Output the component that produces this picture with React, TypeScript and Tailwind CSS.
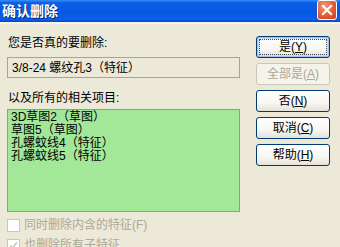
import React from "react";

const font = "font-['Liberation_Sans','Noto_Sans_CJK_SC',sans-serif]";

function XpButton({label, hotkey, disabled = false, isDefault = false}: {
    label: string; hotkey: string; disabled?: boolean; isDefault?: boolean;
}) {
    return (
        <div
            className={
                "h-[22px] w-[74px] rounded-[3px] border flex items-center justify-center text-[12px] leading-none " +
                (disabled
                    ? "border-[#c9c7ba] bg-[#f5f4ea] text-[#aca899]"
                    : "border-[#003c74] bg-[linear-gradient(to_bottom,#ffffff_0%,#f7f6f2_60%,#e3e2da_100%)] text-black") +
                (isDefault ? " shadow-[inset_0_0_0_1px_#a6c2f4,inset_0_0_0_2px_#cfdcf6] outline outline-1 outline-dotted outline-[#444] outline-offset-[-4px]" : "")
            }>
            <span>
                {label}(<span className="underline underline-offset-1">{hotkey}</span>)
            </span>
        </div>
    );
}

function Check({checked = false, label}: { checked?: boolean; label: string }) {
    return (
        <div className="flex items-center gap-[4px] h-[14px]">
            <div className="w-[13px] h-[13px] border border-[#c9c7ba] bg-white flex items-center justify-center">
                {checked && (
                    <svg width="9" height="9" viewBox="0 0 9 9">
                        <path d="M1 4.5 L3.5 7 L8 1.5" stroke="#c9c7ba" strokeWidth="1.6" fill="none"/>
                    </svg>
                )}
            </div>
            <span className="text-[12px] text-[#aca899] leading-[14px]">{label}</span>
        </div>
    );
}

export default function App() {
    return (
        <div className={"w-[340px] h-[247px] overflow-hidden bg-[#ece9d8] " + font}>
            {/* title bar */}
            <div
                className="h-[22px] flex items-center justify-between pl-[2px] pr-[3px] bg-[linear-gradient(to_bottom,#3d8ff9_0%,#0a5fe8_12%,#0558e2_55%,#0a5fea_88%,#0646c4_100%)]">
                <span
                    className="text-white font-bold text-[14px] leading-none [text-shadow:1px_1px_0_#0a1e6e]">确认删除</span>
                <div
                    className="w-[20px] h-[20px] -mt-[2px] rounded-[3px] border border-white bg-[radial-gradient(circle_at_35%_30%,#f39a78_0%,#e35c35_55%,#c8401c_100%)] flex items-center justify-center">
                    <svg width="12" height="12" viewBox="0 0 12 12">
                        <path d="M2 2 L10 10 M10 2 L2 10" stroke="white" strokeWidth="2.2" strokeLinecap="square"/>
                    </svg>
                </div>
            </div>
            <div className="h-[2px] bg-[#f5f3ea]"></div>

            <div className="flex pl-[7px]">
                {/* left column */}
                <div className="w-[233px] flex flex-col">
                    <div className="mt-[12px] text-[12px] leading-[14px] pl-[1px]">您是否真的要删除:</div>
                    <div
                        className="mt-[7px] h-[21px] border border-[#a5a49b] bg-[#ece9d8] flex items-center pl-[4px] text-[12px] leading-none">
                        3/8-24 螺纹孔3（特征）
                    </div>
                    <div className="mt-[13px] text-[12px] leading-[14px] pl-[1px]">以及所有的相关项目:</div>
                    <div
                        className="mt-[4px] h-[103px] border border-[#7f9db9] bg-[#a3e898] pl-[3px] pt-[1px] text-[12px] leading-[13px]">
                        <div>3D草图2（草图）</div>
                        <div>草图5（草图）</div>
                        <div>孔螺蚊线4（特征）</div>
                        <div>孔螺蚊线5（特征）</div>
                    </div>
                    <div className="mt-[6px] flex flex-col gap-[6px]">
                        <Check label="同时删除内含的特征(F)"/>
                        <Check checked label="也删除所有子特征"/>
                    </div>
                </div>

                {/* buttons */}
                <div className="ml-[16px] mt-[12px] flex flex-col gap-[5px]">
                    <XpButton label="是" hotkey="Y" isDefault/>
                    <XpButton label="全部是" hotkey="A" disabled/>
                    <XpButton label="否" hotkey="N"/>
                    <XpButton label="取消" hotkey="C"/>
                    <XpButton label="帮助" hotkey="H"/>
                </div>
            </div>
        </div>
    );
}
